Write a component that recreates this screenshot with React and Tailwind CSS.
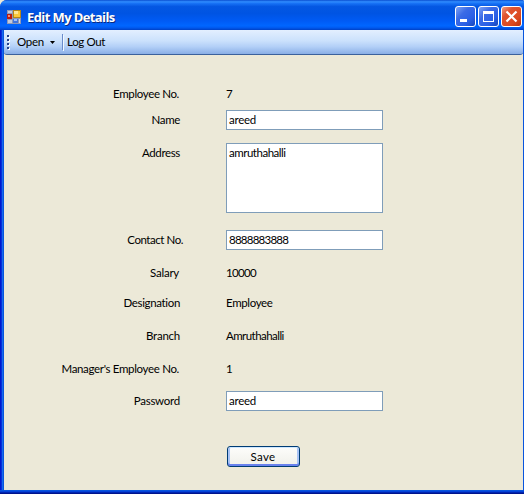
const FONT = "font-['Lato','Liberation_Sans',sans-serif]";

const rows = [
  { label: 'Employee No.', value: '7', gap: 'mt-0', lt: 'w-[175px] mr-[47px] tracking-[-0.35px]', vt: 'tracking-[0px]' },
  { label: 'Name', value: 'areed', field: true, gap: 'mt-[6px]', lt: 'w-[176px] mr-[46px] tracking-[-0.35px]', vt: 'tracking-[-0.25px]' },
  { label: 'Address', value: 'amruthahalli', field: true, tall: true, gap: 'mt-[13px]', lt: 'w-[176px] mr-[46px] tracking-[-0.35px]', vt: 'tracking-[-0.48px]' },
  { label: 'Contact No.', value: '8888883888', field: true, gap: 'mt-[17px]', lt: 'w-[179px] mr-[43px] tracking-[-0.45px]', vt: 'tracking-[-0.75px]' },
  { label: 'Salary', value: '10000', gap: 'mt-[13px]', lt: 'w-[175px] mr-[47px] tracking-[-0.25px]', vt: 'tracking-[-0.7px]' },
  { label: 'Designation', value: 'Employee', gap: 'mt-[10px]', lt: 'w-[176px] mr-[46px] tracking-[-0.35px]', vt: 'tracking-[-0.35px]' },
  { label: 'Branch', value: 'Amruthahalli', gap: 'mt-[13px]', lt: 'w-[176px] mr-[46px] tracking-[-0.25px]', vt: 'tracking-[-0.55px]' },
  { label: "Manager's Employee No.", value: '1', gap: 'mt-[13px]', lt: 'w-[175px] mr-[47px] tracking-[-0.33px]', vt: 'tracking-[0px]' },
  { label: 'Password', value: 'areed', field: true, gap: 'mt-[12px]', lt: 'w-[176px] mr-[46px] tracking-[-0.25px]', vt: 'tracking-[-0.25px]' },
];

function FormIcon() {
  return (
    <svg className="block h-[16px] w-[16px]" viewBox="0 0 16 16" shapeRendering="crispEdges">
      <rect x="0" y="1" width="14" height="14" fill="#8d99b8" />
      <rect x="1" y="2" width="4" height="2" fill="#c5cbdc" />
      <rect x="0" y="5" width="5" height="5" fill="#b91c10" />
      <rect x="1" y="6" width="2" height="2" fill="#f58a70" />
      <rect x="6" y="1" width="8" height="8" fill="#b68716" />
      <rect x="7" y="2" width="6" height="6" fill="#fbc93a" />
      <rect x="7" y="2" width="4" height="3" fill="#ffe694" />
      <rect x="1" y="11" width="4" height="3" fill="#c5cbdc" />
      <rect x="6" y="10" width="5" height="4" fill="#3f74df" />
      <rect x="7" y="10" width="3" height="2" fill="#9cc0ff" />
      <rect x="12" y="10" width="1" height="4" fill="#d5dbe8" />
    </svg>
  );
}

function CaptionButton({ kind }) {
  const close = kind === 'close';
  return (
    <div
      className={
        'h-[21px] w-[21px] rounded-[3px] border border-white ' +
        (close
          ? 'bg-[linear-gradient(135deg,#ef9b82_0%,#e0542f_30%,#dc4a20_70%,#b93410_100%)]'
          : 'bg-[linear-gradient(135deg,#7da2f4_0%,#3b6be6_35%,#2a5fe6_70%,#1745b8_100%)]')
      }
    >
      <svg className="block h-[19px] w-[19px]" viewBox="0 0 19 19">
        {kind === 'min' && <rect x="4" y="12" width="7" height="3" fill="#fff" />}
        {kind === 'max' && <path d="M4 4h11v11H4zM5 7v7h9V7z" fill="#fff" fillRule="evenodd" />}
        {close && <path d="M4.5 4.5l10 10M14.5 4.5l-10 10" stroke="#fff" strokeWidth="2.2" />}
      </svg>
    </div>
  );
}

function Row({ row }) {
  return (
    <div className={'flex items-start ' + row.gap}>
      <div className={'shrink-0 text-right leading-[20px] ' + row.lt}>{row.label}</div>
      {row.field ? (
        <div
          className={
            'w-[157px] border border-[#7f9db9] bg-white pl-[2px] leading-[18px] ' +
            (row.tall ? 'h-[70px] ' : 'h-[20px] ') +
            row.vt
          }
        >
          {row.value}
        </div>
      ) : (
        <div className={'h-[20px] leading-[20px] ' + row.vt}>{row.value}</div>
      )}
    </div>
  );
}

export default function App() {
  return (
    <div className={'flex h-[495px] w-[524px] flex-col overflow-hidden bg-white text-[11.5px] text-black whitespace-nowrap ' + FONT}>
      <div className="bg-[linear-gradient(180deg,#ece9d8_0_8px,#ffffff_8px)]">
        <div className="flex h-[494px] flex-col overflow-hidden rounded-tl-[7px] rounded-tr-[2px] bg-[#0046e0]">
          <div className="flex h-[30px] shrink-0 items-center bg-[linear-gradient(180deg,#0a4fd0_0%,#2f8cff_6%,#1670f4_12%,#0457e2_22%,#0054e3_45%,#005bf5_70%,#0066ff_86%,#0058ee_93%,#0040c4_100%)] pt-[3px] pr-[2px] pl-[7px]">
            <FormIcon />
            <div className="ml-[4px] font-['Open_Sans','Noto_Sans',sans-serif] text-[13px] leading-[20px] font-bold tracking-[-0.6px] text-white [text-shadow:1px_1px_0_#0a2a80]">
              Edit My Details
            </div>
            <div className="ml-auto flex gap-[2px]">
              <CaptionButton kind="min" />
              <CaptionButton kind="max" />
              <CaptionButton kind="close" />
            </div>
          </div>
          <div className="flex min-h-0 flex-1">
            <div className="w-[4px] shrink-0 bg-[linear-gradient(90deg,#0019cf_0_25%,#0831d9_25%_50%,#166aee_50%_75%,#0855dd_75%)]" />
            <div className="flex min-w-0 flex-1 flex-col bg-[#ece9d8]">
              <div className="flex h-[25px] shrink-0 items-center rounded-br-[3px] rounded-bl-[3px] border-b border-[#3b619c] bg-[linear-gradient(180deg,#e3efff_0%,#cbe1fc_45%,#b2cff7_70%,#8aafe6_100%)]">
                <div className="ml-[3px] flex flex-col gap-[2px]">
                  {[0, 1, 2, 3].map((i) => (
                    <div key={i} className="h-[2px] w-[2px] bg-[#27418b] shadow-[1px_1px_0_#fff]" />
                  ))}
                </div>
                <div className="ml-[8px] w-[28px] tracking-[-0.25px]">Open</div>
                <svg className="ml-[5px] mt-px block h-[3px] w-[5px]" viewBox="0 0 5 3">
                  <path d="M0 0h5L2.5 3z" fill="#000" />
                </svg>
                <div className="ml-[7px] h-[16px] w-px bg-[#6a8ccb] shadow-[1px_1px_0_#f1f9ff]" />
                <div className="ml-[4px] tracking-[-0.35px]">Log Out</div>
              </div>
              <div className="flex flex-col pt-[29px]">
                {rows.map((row) => (
                  <Row key={row.label} row={row} />
                ))}
                <div className="mt-[35px] ml-[223px] flex h-[21px] w-[73px] items-center justify-center rounded-[3px] border border-[#003c74] bg-[linear-gradient(180deg,#fdfdfb,#f0f0ea)] pr-px shadow-[inset_0_1px_0_#cee7ff,inset_0_-2px_0_#6982ee,inset_2px_0_0_#a9c4f5,inset_-2px_0_0_#a9c4f5]">
                  <span className="tracking-[0.3px]">Save</span>
                </div>
              </div>
            </div>
            <div className="w-px shrink-0 bg-[#0855dd]" />
          </div>
          <div className="h-[4px] shrink-0 bg-[linear-gradient(180deg,#0855dd_0_25%,#0441d8_25%_50%,#0025b0_50%_75%,#00138c_75%)]" />
        </div>
      </div>
    </div>
  );
}
